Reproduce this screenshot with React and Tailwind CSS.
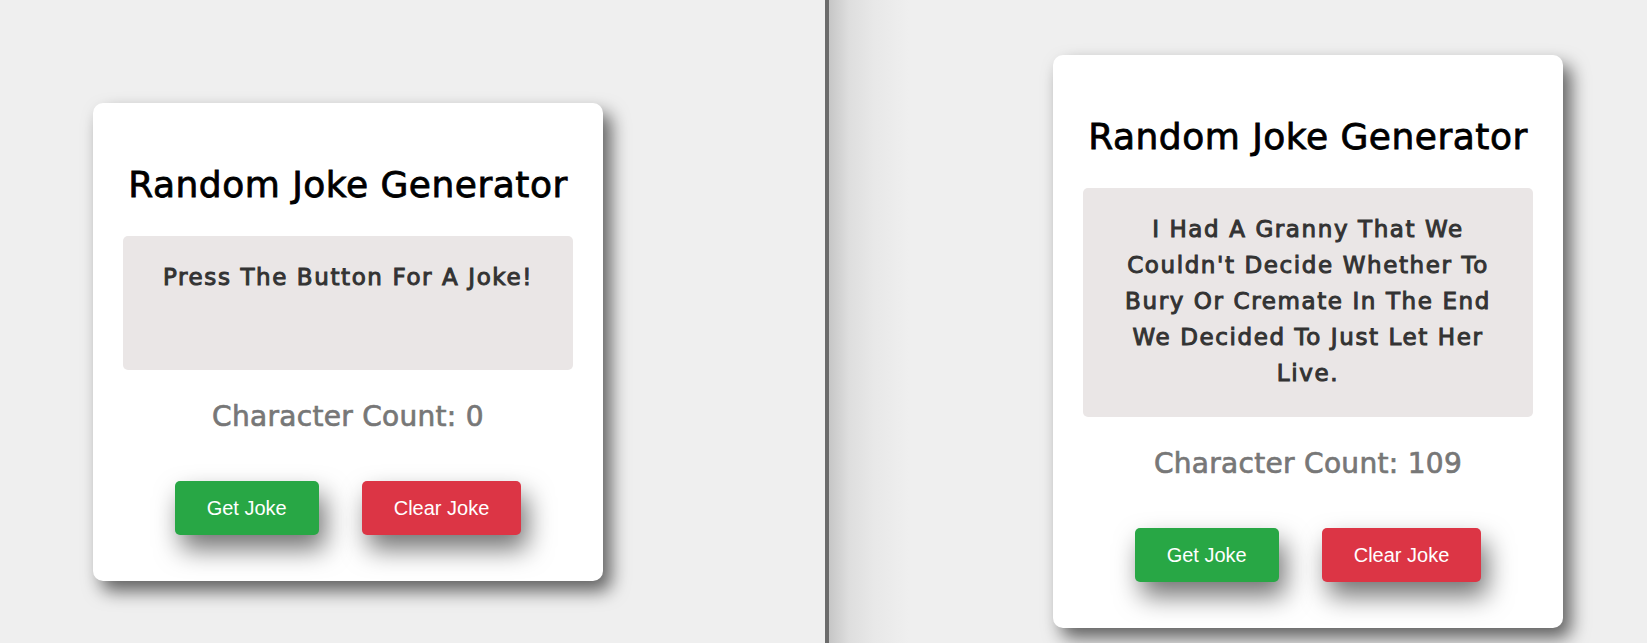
import { useState } from "react";

const JOKES = [
  "I had a granny that we couldn't decide whether to bury or cremate in the end we decided to just let her live.",
  "Why don't skeletons fight each other? They don't have the guts.",
  "I told my wife she was drawing her eyebrows too high. She looked surprised.",
  "What do you call a fake noodle? An impasta.",
];

function JokeCard({ initialJoke = "" }) {
  const [joke, setJoke] = useState(initialJoke);

  const getJoke = () => {
    const next = JOKES[Math.floor(Math.random() * JOKES.length)];
    setJoke(next);
  };

  const clearJoke = () => setJoke("");

  return (
    <div className="w-[510px] bg-white rounded-[10px] px-[30px] pt-[30px] pb-[46px] shadow-[8px_10px_18px_rgba(0,0,0,0.6)] font-['DejaVu_Sans',sans-serif] text-center">
      <h1 className="mt-[30px] mb-[29px] text-[36px] leading-[44px] tracking-[0.5px] text-black [-webkit-text-stroke:0.8px_#000]">
        Random Joke Generator
      </h1>

      <div className="min-h-[134px] bg-[#eae6e6] rounded-[5px] px-[27px] pt-[23px] pb-[26px]">
        <p className="text-[23px] leading-[36px] tracking-[1.6px] text-[#333] capitalize [-webkit-text-stroke:1px_#333]">
          {joke || "Press the button for a joke!"}
        </p>
      </div>

      <p className="mt-[30px] text-[28px] leading-[34px] tracking-[0.3px] text-[#777] [-webkit-text-stroke:0.7px_#777]">
        Character Count: {joke.length}
      </p>

      <div className="mt-[47px] flex justify-center gap-[43px] font-['Liberation_Sans',Arial,sans-serif]">
        <button
          onClick={getJoke}
          className="h-[54px] px-[32px] rounded-[5px] bg-[#28a745] text-white text-[20px] shadow-[6px_14px_26px_rgba(0,0,0,0.55)]"
        >
          Get Joke
        </button>
        <button
          onClick={clearJoke}
          className="h-[54px] px-[32px] rounded-[5px] bg-[#dc3545] text-white text-[20px] shadow-[6px_14px_26px_rgba(0,0,0,0.55)]"
        >
          Clear Joke
        </button>
      </div>
    </div>
  );
}

export default function App() {
  return (
    <div className="flex h-[643px] w-full overflow-hidden">
      <div className="w-[825px] shrink-0 bg-[#efefef] flex items-center pl-[93px] pt-[40px]">
        <JokeCard />
      </div>
      <div className="w-[4px] shrink-0 bg-[#6b6b6b]" />
      <div className="flex-1 flex items-center pl-[224px] pt-[40px] bg-[linear-gradient(to_right,#c6c6c6_0px,#dedede_20px,#e8e8e8_45px,#efefef_80px)]">
        <JokeCard initialJoke={JOKES[0]} />
      </div>
    </div>
  );
}
